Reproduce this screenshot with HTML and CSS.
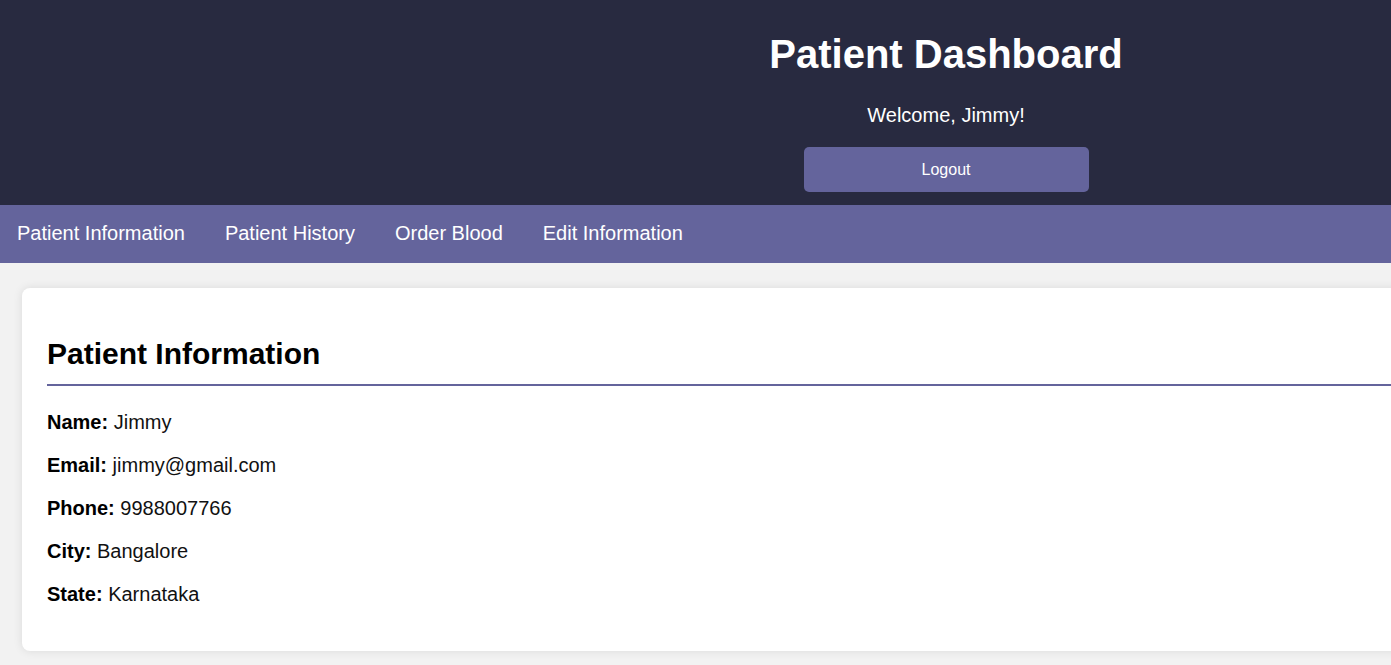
FILE: index.html
```html
<!DOCTYPE html>
<html lang="en">
<head>
<meta charset="utf-8">
<title>Patient Dashboard</title>
<link rel="stylesheet" href="styles.css">
</head>
<body>
<div class="page">
  <header class="header">
    <h1 class="title">Patient Dashboard</h1>
    <p class="welcome">Welcome, Jimmy!</p>
    <button class="logout">Logout</button>
  </header>
  <nav class="nav">
    <a class="nav-link" href="#">Patient Information</a>
    <a class="nav-link" href="#">Patient History</a>
    <a class="nav-link" href="#">Order Blood</a>
    <a class="nav-link" href="#">Edit Information</a>
  </nav>
  <main class="main">
    <section class="card">
      <h2 class="card-title">Patient Information</h2>
      <p class="field"><strong>Name:</strong> Jimmy</p>
      <p class="field"><strong>Email:</strong> jimmy@gmail.com</p>
      <p class="field"><strong>Phone:</strong> 9988007766</p>
      <p class="field"><strong>City:</strong> Bangalore</p>
      <p class="field"><strong>State:</strong> Karnataka</p>
    </section>
  </main>
</div>
</body>
</html>
```

FILE: styles.css
```css
html, body {
  margin: 0;
  padding: 0;
  overflow-x: hidden;
}
body {
  background: #f2f2f2;
  font-family: "Liberation Sans", Arial, sans-serif;
  color: #000;
}
.page {
  width: 1892px;
}
.header {
  background: #282a40;
  color: #fff;
  text-align: center;
  padding: 31px 0 13px;
}
.title {
  margin: 0;
  font-size: 40px;
  font-weight: bold;
  line-height: 46px;
}
.welcome {
  margin: 27px 0 20px;
  font-size: 20px;
  line-height: 23px;
}
.logout {
  display: block;
  margin: 0 auto;
  width: 285px;
  height: 45px;
  border: none;
  border-radius: 5px;
  background: #64649c;
  color: #fff;
  font-family: "Liberation Sans", Arial, sans-serif;
  font-size: 16px;
}
.nav {
  display: flex;
  gap: 40px;
  background: #64649c;
  padding: 17px 17px 18px;
}
.nav-link {
  color: #fff;
  text-decoration: none;
  font-size: 20px;
  line-height: 23px;
}
.main {
  padding: 25px 22px;
}
.card {
  background: #fff;
  border-radius: 8px;
  box-shadow: 0 0 10px rgba(0, 0, 0, 0.1);
  padding: 25px;
}
.card-title {
  margin: 24px 0 25px;
  font-size: 30px;
  line-height: 34px;
  padding-bottom: 13px;
  border-bottom: 2px solid #64649c;
}
.field {
  margin: 20px 0;
  font-size: 20px;
  line-height: 23px;
  color: #111;
}
.field strong {
  color: #000;
}
```
